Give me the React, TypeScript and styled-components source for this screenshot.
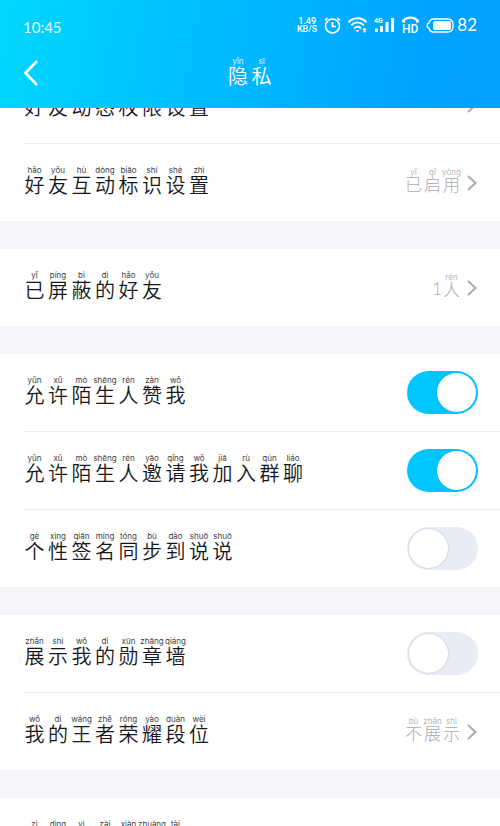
import React, { useState } from "react";
import styled, { createGlobalStyle, css } from "styled-components";

const GlobalStyle = createGlobalStyle`
  * { box-sizing: border-box; }
  body {
    margin: 0;
    background: #f3f5f9;
    font-family: Roboto, "Noto Sans CJK SC", sans-serif;
  }
`;

const Screen = styled.div`
  display: flex;
  flex-direction: column;
  height: 100vh;
  overflow: hidden;
`;

const Header = styled.header`
  flex: none;
  color: #fff;
  background: linear-gradient(100deg, #00d8ff 0%, #00bcff 42%, #00a2ff 85%, #00a0ff 100%);
`;

const StatusBar = styled.div`
  display: flex;
  align-items: center;
  justify-content: space-between;
  height: 50px;
  padding: 0 23px;
`;

const Clock = styled.time`
  padding-top: 3px;
  font-family: Lato, sans-serif;
  font-weight: 400;
  font-size: 15px;
  line-height: 20px;
  color: #e8fbff;
`;

const StatusIcons = styled.div`
  display: flex;
  align-items: center;
  gap: 7px;
  svg {
    display: block;
    overflow: visible;
  }
`;

const Speed = styled.div`
  font-family: Roboto, sans-serif;
  font-weight: 500;
  font-size: 9px;
  line-height: 8px;
  text-align: center;
`;

const Battery = styled.div`
  display: flex;
  align-items: center;
  gap: 3px;
  font-family: Lato, sans-serif;
  font-size: 17px;
  line-height: 20px;
`;

const NavBar = styled.div`
  display: grid;
  grid-template-columns: 1fr auto 1fr;
  align-items: center;
  height: 58px;
  padding: 0 23px 12px;
`;

const BackButton = styled.button`
  justify-self: start;
  display: flex;
  padding: 0;
  border: 0;
  color: inherit;
  background: none;
`;

const Title = styled.h1`
  margin: 0;
  font-weight: 400;
`;

const Scroller = styled.main`
  flex: 1;
  min-height: 0;
  overflow: hidden;
`;

const Groups = styled.div`
  display: flex;
  flex-direction: column;
  gap: 28px;
  margin-top: -42px;
`;

const Group = styled.section`
  background: #fff;
`;

const rowStyle = css`
  display: flex;
  align-items: center;
  justify-content: space-between;
  width: 100%;
  height: 77px;
  padding: 0 23px;
  border: 0;
  background: none;
  color: #15161c;
  font: inherit;
  text-align: left;
`;

const LinkRow = styled.button`${rowStyle}`;
const SwitchRow = styled.label`${rowStyle}`;

const Divider = styled.hr`
  height: 1px;
  margin: 0 0 0 23px;
  border: 0;
  background: #ebecef;
`;

const Phrase = styled.span<{ $small?: boolean }>`
  display: flex;
  align-items: flex-end;
  padding-bottom: ${(p) => (p.$small ? 6 : 4)}px;
  font-family: "Noto Sans CJK SC", sans-serif;
  font-weight: ${(p) => (p.$small ? 300 : 350)};
  font-size: ${(p) => (p.$small ? 17 : 20)}px;
  line-height: ${(p) => (p.$small ? 16 : 21)}px;
`;

const Syllable = styled.span<{ $small?: boolean }>`
  display: flex;
  flex-direction: column;
  align-items: center;
  width: ${(p) => (p.$small ? 19 : 23)}px;
  &:nth-child(even) { width: ${(p) => (p.$small ? 19 : 24)}px; }
`;

const Pinyin = styled.span`
  font-family: Inter, sans-serif;
  font-weight: 400;
  font-size: 8px;
  line-height: 8px;
  white-space: nowrap;
  opacity: 0.85;
`;

const Digit = styled.span`
  font-family: Lato, sans-serif;
  font-size: 17px;
`;

const Trailing = styled.span`
  display: flex;
  align-items: center;
  gap: 6px;
  color: #a9abb3;
`;

const Switch = styled.input`
  appearance: none;
  flex: none;
  display: flex;
  width: 71px;
  height: 43px;
  margin: 0 -1px 0 0;
  padding: 2px;
  border-radius: 22px;
  background: #e9ebf5;
  &::before {
    content: "";
    width: 39px;
    height: 39px;
    border-radius: 50%;
    background: #fff;
    box-shadow: 0 0 2px rgba(60, 70, 120, 0.3);
  }
  &:checked {
    justify-content: flex-end;
    background: #00c6ff;
  }
`;

/* "字:pinyin" pairs separated by spaces; a bare token is shown without a reading. */
function Ruby({ text, small }: { text: string; small?: boolean }) {
  return (
    <Phrase $small={small}>
      {text.split(" ").map((pair, i) => {
        const [char, reading] = pair.split(":");
        if (!reading) return <Digit key={i}>{char}</Digit>;
        return (
          <Syllable key={i} $small={small}>
            <Pinyin>{reading}</Pinyin>
            <span>{char}</span>
          </Syllable>
        );
      })}
    </Phrase>
  );
}

function Chevron() {
  return (
    <svg width="10" height="16" viewBox="0 0 10 16" fill="none" stroke="#a9abb3" strokeWidth="2" aria-hidden="true">
      <path d="M1 1l7.5 7L1 15" />
    </svg>
  );
}

type Item = { label: string; value?: string; on?: boolean };

const groups: Item[][] = [
  [
    { label: "好:hǎo 友:yǒu 动:dòng 态:tài 权:quán 限:xiàn 设:shè 置:zhì" },
    { label: "好:hǎo 友:yǒu 互:hù 动:dòng 标:biāo 识:shí 设:shè 置:zhì", value: "已:yǐ 启:qǐ 用:yòng" },
  ],
  [{ label: "已:yǐ 屏:píng 蔽:bì 的:dì 好:hǎo 友:yǒu", value: "1 人:rén" }],
  [
    { label: "允:yǔn 许:xǔ 陌:mò 生:shēng 人:rén 赞:zàn 我:wǒ", on: true },
    { label: "允:yǔn 许:xǔ 陌:mò 生:shēng 人:rén 邀:yāo 请:qǐng 我:wǒ 加:jiā 入:rù 群:qún 聊:liáo", on: true },
    { label: "个:gè 性:xìng 签:qiān 名:míng 同:tóng 步:bù 到:dào 说:shuō 说:shuō", on: false },
  ],
  [
    { label: "展:zhǎn 示:shì 我:wǒ 的:dì 勋:xūn 章:zhāng 墙:qiáng", on: false },
    { label: "我:wǒ 的:dì 王:wáng 者:zhě 荣:róng 耀:yào 段:duàn 位:wèi", value: "不:bù 展:zhǎn 示:shì" },
  ],
  [{ label: "自:zì 定:dìng 义:yì 在:zài 线:xiàn 状:zhuàng 态:tài" }],
];

function Row({ item }: { item: Item }) {
  const [on, setOn] = useState(!!item.on);
  if (item.on !== undefined) {
    return (
      <SwitchRow>
        <Ruby text={item.label} />
        <Switch type="checkbox" role="switch" checked={on} onChange={() => setOn(!on)} />
      </SwitchRow>
    );
  }
  return (
    <LinkRow type="button">
      <Ruby text={item.label} />
      <Trailing>
        {item.value && <Ruby small text={item.value} />}
        <Chevron />
      </Trailing>
    </LinkRow>
  );
}

export default function App() {
  return (
    <Screen>
      <GlobalStyle />
      <Header>
        <StatusBar>
          <Clock>10:45</Clock>
          <StatusIcons>
            <Speed>1.49<br />KB/S</Speed>
            <svg width="17" height="17" viewBox="0 0 17 17" fill="none" stroke="#fff" strokeWidth="1.7" aria-hidden="true">
              <circle cx="8.5" cy="9" r="7" />
              <path d="M8.5 5v4.5H12M1 3.5L3.5 1M16 3.5L13.5 1" />
            </svg>
            <svg width="19" height="16" viewBox="0 0 19 16" fill="none" stroke="#fff" strokeWidth="2" aria-hidden="true">
              <path d="M.5 5.200C5.500 0 13.500 0 18.500 5.200M3.200 8.300c3.800-3.700 8.800-3.700 12.600 0M6 11.400c2.200-2 4.800-2 7 0" />
              <path d="M7.500 13h4l-2 2.500z" fill="#fff" stroke="none" />
              <path d="M14 13l2.500-2.500L19 13h-1.500v2.500h-2V13z" fill="#fff" stroke="none" />
            </svg>
            <svg width="21" height="16" viewBox="0 0 21 16" fill="#fff" aria-hidden="true">
              <text x="0" y="6" fontSize="7" fontWeight="700" fontFamily="Roboto, sans-serif">4G</text>
              <path d="M1 11.500h3V15H1zM6 9h3v6H6zM11.500 5h3v10h-3zM17 1h3v14h-3z" />
            </svg>
            <svg width="17" height="16" viewBox="0 0 17 16" fill="#fff" aria-hidden="true">
              <path d="M1.500 4C4 -.5 13 -.5 15.500 4" fill="none" stroke="#fff" strokeWidth="2.200" />
              <path d="M0 2.500l3.500 1L2.500 6 0 5zM17 2.500l-3.500 1 1 2.500L17 5z" />
              <text x="0" y="16" fontSize="12" fontWeight="500" fontFamily="Roboto, sans-serif">HD</text>
            </svg>
            <Battery>
              <svg width="28" height="15" viewBox="0 0 28 15" aria-hidden="true">
                <path d="M8 1h14a5 5 0 0 1 5 5v3a5 5 0 0 1-5 5H8a5 5 0 0 1-5-4Q1 9.500 1 7.500T3 5A5 5 0 0 1 8 1z" fill="none" stroke="#fff" strokeWidth="1.300" />
                <rect x="7" y="3" width="18" height="9" rx="2" fill="#fff" />
              </svg>
              82
            </Battery>
          </StatusIcons>
        </StatusBar>
        <NavBar>
          <BackButton type="button" aria-label="返回">
            <svg width="15" height="26" viewBox="0 0 15 26" fill="none" stroke="currentColor" strokeWidth="2.600" aria-hidden="true">
              <path d="M14 1L2.500 13 14 25" />
            </svg>
          </BackButton>
          <Title><Ruby text="隐:yǐn 私:sī" /></Title>
        </NavBar>
      </Header>
      <Scroller>
        <Groups>
          {groups.map((items, g) => (
            <Group key={g}>
              {items.map((item, i) => (
                <React.Fragment key={i}>
                  {i > 0 && <Divider />}
                  <Row item={item} />
                </React.Fragment>
              ))}
            </Group>
          ))}
        </Groups>
      </Scroller>
    </Screen>
  );
}
